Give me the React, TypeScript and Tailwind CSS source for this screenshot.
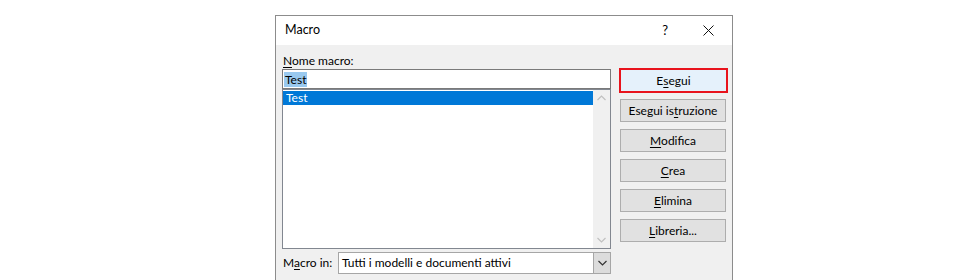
import React from "react";

function Chevron({ up, color }: { up?: boolean; color: string }) {
  return (
    <svg width="9" height="6" viewBox="0 0 9 6" className="block">
      <path
        d={up ? "M0.5 5 L4.5 1 L8.5 5" : "M0.5 1 L4.5 5 L8.5 1"}
        fill="none"
        stroke={color}
        strokeWidth="1.2"
      />
    </svg>
  );
}

function Btn({ u, rest, pre }: { pre?: string; u: string; rest: string }) {
  return (
    <button className="ml-[1px] w-[106px] h-[23px] border border-[#adadad] bg-[#e1e1e1] text-[12px] text-black flex items-center justify-center leading-none">
      {pre}
      <span className="underline underline-offset-2">{u}</span>
      {rest}
    </button>
  );
}

export default function App() {
  return (
    <div
      className="h-[280px] w-[969px] overflow-hidden bg-white pl-[275px] pt-[15px]"
      style={{ fontFamily: 'Lato, "Noto Sans", sans-serif' }}
    >
      <div className="w-[458px] h-[280px] border border-[#8c8c8c] bg-[#f0f0f0] flex flex-col">
        <div className="h-[29px] bg-white flex items-center text-[12px] text-black">
          <span className="ml-[9px] text-[12.5px]">Macro</span>
          <span className="ml-auto mr-[35px] text-[13px]">?</span>
          <svg width="11" height="11" viewBox="0 0 11 11" className="mr-[18px]">
            <path d="M0.5 0.5 L10.5 10.5 M10.5 0.5 L0.5 10.5" stroke="#111" strokeWidth="1" />
          </svg>
        </div>
        <div className="flex text-[12px] text-black">
          <div className="ml-[6px] w-[329px] flex flex-col">
            <div className="mt-[7px] h-[17px] leading-[17px] pl-[1px]">
              <span className="underline underline-offset-2">N</span>ome macro:
            </div>
            <div className="h-[20px] border border-[#7a7a7a] bg-white flex items-center pl-[1px]">
              <span className="bg-[#99c9ef] px-[1px] leading-[15px]">Test</span>
            </div>
            <div className="h-[160px] border border-[#828790] bg-white flex">
              <div className="flex-1 pt-[1px]">
                <div className="h-[14px] bg-[#0078d7] text-white leading-[14px] pl-[3px]">Test</div>
              </div>
              <div className="w-[17px] bg-[#f0f0f0] flex flex-col items-center justify-between py-[5px]">
                <Chevron up color="#c0c0c0" />
                <Chevron color="#c0c0c0" />
              </div>
            </div>
            <div className="mt-[3px] flex items-center">
              <span className="pl-[1px] w-[56px]">
                M<span className="underline underline-offset-2">a</span>cro in:
              </span>
              <div className="w-[273px] h-[22px] border border-[#a6a6a6] bg-white flex items-center">
                <span className="pl-[3px] flex-1">Tutti i modelli e documenti attivi</span>
                <div className="w-[17px] h-full bg-[#dcdcdc] border-l border-[#a6a6a6] flex items-center justify-center">
                  <Chevron color="#333" />
                </div>
              </div>
            </div>
          </div>
          <div className="ml-[8px] mt-[23px] flex flex-col">
            <button className="w-[109px] h-[25px] border-2 border-[#e8131c] bg-[#e5f1fb] text-[12px] flex items-center justify-center leading-none">
              E<span className="underline underline-offset-2">s</span>egui
            </button>
            <div className="mt-[6px] flex flex-col gap-[7px]">
              <Btn pre="Esegui is" u="t" rest="ruzione" />
              <Btn u="M" rest="odifica" />
              <Btn u="C" rest="rea" />
              <Btn u="E" rest="limina" />
              <Btn u="L" rest="ibreria..." />
            </div>
          </div>
        </div>
      </div>
    </div>
  );
}
